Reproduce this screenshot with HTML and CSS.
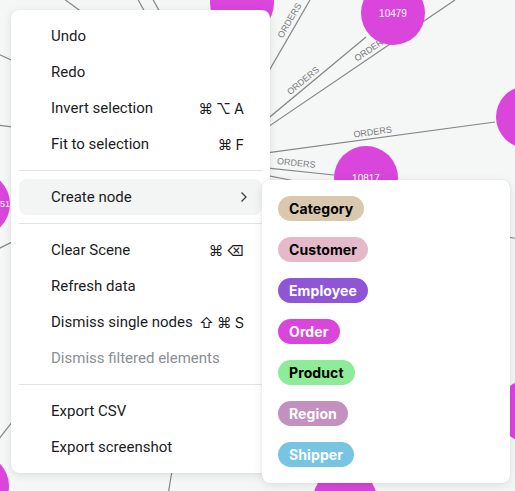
FILE: index.html
```html
<!DOCTYPE html>
<html>
<head>
<meta charset="utf-8">
<link rel="stylesheet" href="styles.css">
</head>
<body>
<div class="scene">
  <svg class="canvas" width="515" height="491" viewBox="0 0 515 491">
    <g class="edges">
      <line x1="200" y1="190" x2="310" y2="0"/>
      <line x1="200" y1="175" x2="366" y2="37"/>
      <line x1="200" y1="173" x2="455" y2="0"/>
      <line x1="200" y1="162" x2="495" y2="122"/>
      <line x1="200" y1="161" x2="334" y2="175"/>
      <line x1="200" y1="162" x2="300" y2="182"/>
      <line x1="60" y1="-4" x2="90" y2="18"/>
      <line x1="136" y1="-4" x2="146" y2="14"/>
      <line x1="151" y1="-4" x2="161" y2="14"/>
      <line x1="-2" y1="54" x2="20" y2="64"/>
      <line x1="-2" y1="125" x2="20" y2="128"/>
      <line x1="-2" y1="249" x2="20" y2="238"/>
      <line x1="-2" y1="440" x2="20" y2="412"/>
      <line x1="173" y1="465" x2="168" y2="495"/>
      <line x1="500" y1="236" x2="520" y2="239"/>
    </g>
    <g class="labels">
      <text transform="translate(292 22) rotate(-60)">ORDERS</text>
      <text transform="translate(305 83) rotate(-40)">ORDERS</text>
      <text transform="translate(373 51) rotate(-34)">ORDERS</text>
      <text transform="translate(373 135) rotate(-7.7)">ORDERS</text>
      <text transform="translate(296 166) rotate(5.7)">ORDERS</text>
    </g>
    <g class="nodes">
      <circle cx="242" cy="3" r="32"/>
      <circle cx="393" cy="13" r="32"/>
      <circle cx="527" cy="117" r="31"/>
      <circle cx="366" cy="178" r="32"/>
      <circle cx="-22" cy="204" r="32"/>
      <circle cx="-23" cy="486" r="32"/>
      <circle cx="345" cy="500" r="32"/>
      <circle cx="530" cy="411" r="32"/>
    </g>
    <g class="node-labels">
      <text x="393" y="17">10479</text>
      <text x="366" y="182">10817</text>
      <text class="start" x="0" y="207">518</text>
    </g>
  </svg>

  <div class="menu main-menu">
    <div class="item"><span>Undo</span></div>
    <div class="item"><span>Redo</span></div>
    <div class="item"><span>Invert selection</span><span class="kbd">⌘ ⌥ A</span></div>
    <div class="item"><span>Fit to selection</span><span class="kbd">⌘ F</span></div>
    <div class="sep"></div>
    <div class="item active"><span>Create node</span>
      <svg class="chev" width="8" height="12" viewBox="0 0 8 12"><path d="M1.5 1.5 L6 6 L1.5 10.5" fill="none" stroke="#3a3c40" stroke-width="1.3"/></svg>
    </div>
    <div class="sep"></div>
    <div class="item"><span>Clear Scene</span><span class="kbd">⌘ ⌫</span></div>
    <div class="item"><span>Refresh data</span></div>
    <div class="item"><span>Dismiss single nodes</span><span class="kbd">⇧ ⌘ S</span></div>
    <div class="item disabled"><span>Dismiss filtered elements</span></div>
    <div class="sep"></div>
    <div class="item"><span>Export CSV</span></div>
    <div class="item"><span>Export screenshot</span></div>
  </div>

  <div class="menu sub-menu">
    <div class="row"><span class="pill category">Category</span></div>
    <div class="row"><span class="pill customer">Customer</span></div>
    <div class="row"><span class="pill employee">Employee</span></div>
    <div class="row"><span class="pill order">Order</span></div>
    <div class="row"><span class="pill product">Product</span></div>
    <div class="row"><span class="pill region">Region</span></div>
    <div class="row"><span class="pill shipper">Shipper</span></div>
  </div>
</div>
</body>
</html>
```

FILE: styles.css
```css
html, body {
  margin: 0;
  padding: 0;
}
body {
  width: 515px;
  height: 491px;
  overflow: hidden;
  background: #f5f6f6;
  font-family: "Roboto", "DejaVu Sans", sans-serif;
  color: #1b1c1e;
}
.scene {
  position: relative;
  width: 515px;
  height: 491px;
  overflow: hidden;
}
.canvas {
  position: absolute;
  left: 0;
  top: 0;
}
.edges line {
  stroke: #858585;
  stroke-width: 1.2;
}
.labels text {
  font-family: "Liberation Sans", sans-serif;
  font-size: 9px;
  fill: #7a7a7a;
  text-anchor: middle;
}
.nodes circle {
  fill: #da45dc;
}
.node-labels text {
  font-family: "Liberation Sans", sans-serif;
  font-size: 10px;
  fill: #ffffff;
  text-anchor: middle;
}
.node-labels text.start {
  text-anchor: start;
  font-size: 9px;
}
.menu {
  position: absolute;
  background: #ffffff;
  border-radius: 8px;
  box-shadow: 0 2px 10px rgba(0, 0, 0, 0.10), 0 0 1px rgba(0, 0, 0, 0.12);
  box-sizing: border-box;
}
.main-menu {
  left: 11px;
  top: 10px;
  width: 259px;
  padding: 8px;
  display: flex;
  flex-direction: column;
}
.item {
  height: 36px;
  display: flex;
  align-items: center;
  justify-content: space-between;
  padding: 0 18px 0 32px;
  border-radius: 8px;
  font-size: 15px;
  white-space: nowrap;
}
.item.active {
  background: #f3f4f4;
  padding-right: 14px;
}
.item.disabled {
  color: #8b8e92;
}
.kbd {
  font-family: "Inter", "DejaVu Sans", sans-serif;
  font-size: 14.5px;
  white-space: pre;
  word-spacing: -1px;
}
.chev {
  display: block;
}
.sep {
  height: 1px;
  background: #e1e3e4;
  margin: 8px 0;
}
.sub-menu {
  left: 262px;
  top: 180px;
  width: 248px;
  padding: 8px 16px;
  display: flex;
  flex-direction: column;
}
.row {
  height: 41px;
  display: flex;
  align-items: center;
}
.pill {
  height: 25px;
  line-height: 25px;
  padding: 0 11px;
  border-radius: 13px;
  font-family: "Inter", sans-serif;
  font-size: 14px;
  font-weight: 700;
  letter-spacing: 0.1px;
}
.category { background: #d9c8ae; color: #000; }
.customer { background: #e4b9c9; color: #000; }
.employee { background: #8e55d7; color: #fff; }
.order { background: #da45dc; color: #fff; }
.product { background: #8eeb99; color: #000; }
.region { background: #c390bf; color: #fff; }
.shipper { background: #78c4e3; color: #fff; }
```
